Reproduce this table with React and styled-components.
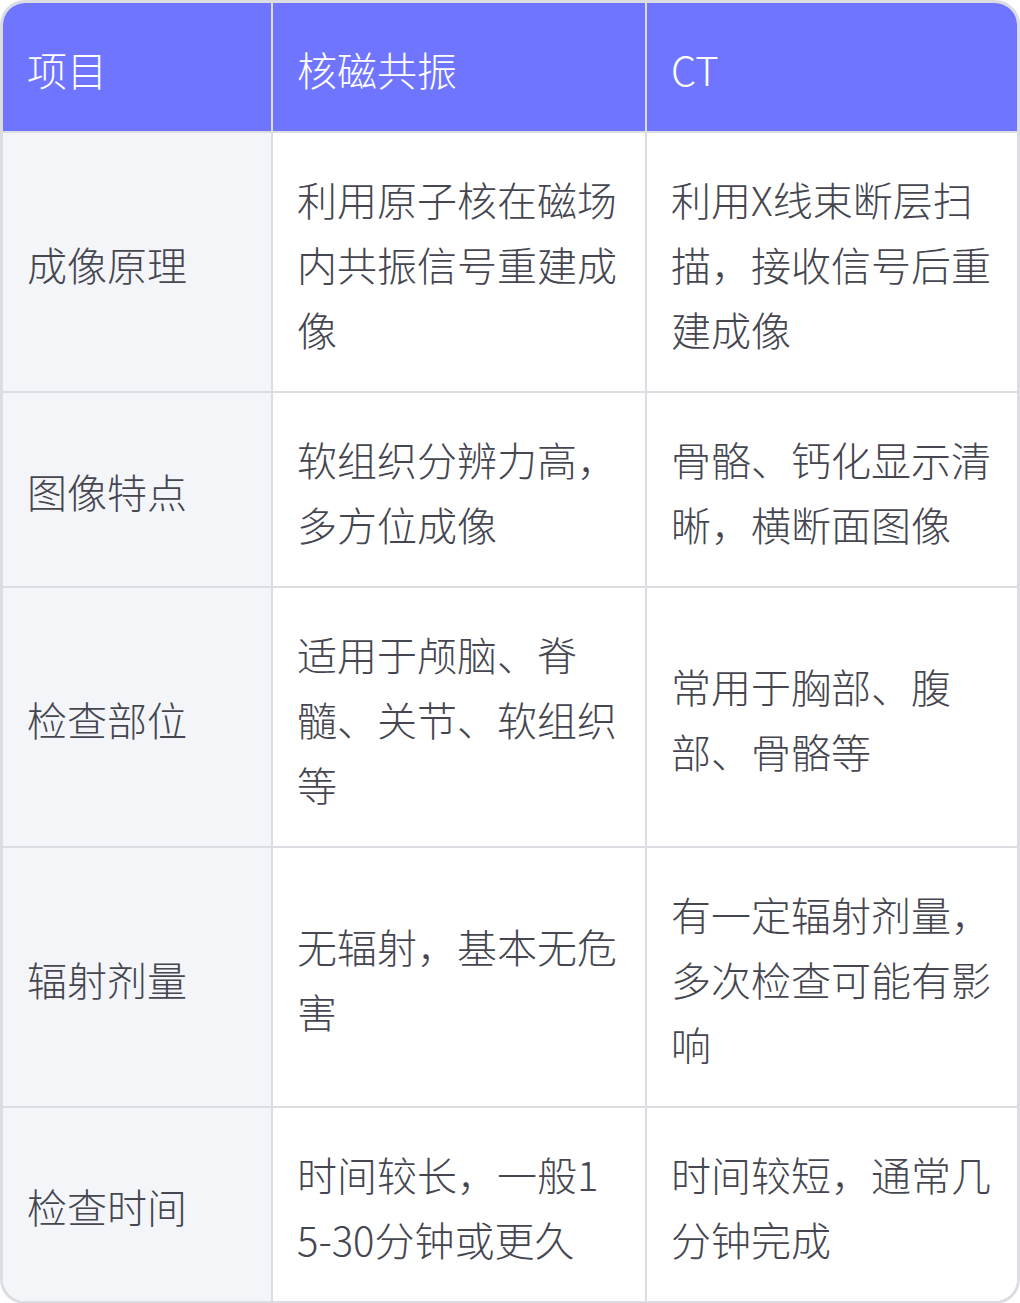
import React from 'react';
import styled, { createGlobalStyle } from 'styled-components';

const GlobalStyle = createGlobalStyle`
   html, body {
      margin: 0;
      padding: 0;
      background: #ffffff;
   }
   body {
      font-family: "Noto Sans CJK SC", "Noto Sans", sans-serif;
   }
`;

const rows = [
   {
      item: '成像原理',
      mri: '利用原子核在磁场内共振信号重建成像',
      ct: '利用X线束断层扫描，接收信号后重建成像',
   },
   {
      item: '图像特点',
      mri: '软组织分辨力高，多方位成像',
      ct: '骨骼、钙化显示清晰，横断面图像',
   },
   {
      item: '检查部位',
      mri: '适用于颅脑、脊髓、关节、软组织等',
      ct: '常用于胸部、腹部、骨骼等',
   },
   {
      item: '辐射剂量',
      mri: '无辐射，基本无危害',
      ct: '有一定辐射剂量，多次检查可能有影响',
   },
   {
      item: '检查时间',
      mri: '时间较长，一般15-30分钟或更久',
      ct: '时间较短，通常几分钟完成',
   },
];

const App = () => {
   return (
      <>
         <GlobalStyle />
         <TableFrame>
            <Table>
               <colgroup>
                  <col style={{ width: 270 }} />
                  <col style={{ width: 374 }} />
                  <col />
               </colgroup>
               <thead>
                  <tr>
                     <HeadCell>项目</HeadCell>
                     <HeadCell>核磁共振</HeadCell>
                     <HeadCell>CT</HeadCell>
                  </tr>
               </thead>
               <tbody>
                  {rows.map((row) => (
                     <tr key={row.item}>
                        <Cell label>{row.item}</Cell>
                        <Cell>{row.mri}</Cell>
                        <Cell>{row.ct}</Cell>
                     </tr>
                  ))}
               </tbody>
            </Table>
         </TableFrame>
      </>
   );
}

/* Styles */
const TableFrame = styled.div`
   width: 1020px;
   box-sizing: border-box;
   border: 3px solid #dcdde3;
   border-radius: 25px;
   overflow: hidden;
`;

const Table = styled.table`
   width: 100%;
   table-layout: fixed;
   border-collapse: separate;
   border-spacing: 0;

   tbody tr:last-child td {
      border-bottom: none;
   }
`;

const HeadCell = styled.th`
   padding: 33.5px 26px 29.5px 24px;
   background: #7075ff;
   color: #ffffff;
   font-size: 40px;
   font-weight: 300;
   line-height: 65px;
   text-align: left;
   border-right: 2px solid #dcdde3;
   border-bottom: 2px solid #dcdde3;

   &:last-child {
      border-right: none;
   }
`;

const Cell = styled.td`
   padding: 33.5px 26px 29.5px 24px;
   background: ${props => props.label ? '#f4f5f9' : '#ffffff'};
   color: #45464f;
   font-size: 40px;
   font-weight: 300;
   line-height: 65px;
   vertical-align: middle;
   word-break: break-all;
   border-right: 2px solid #dcdde3;
   border-bottom: 2px solid #dcdde3;

   &:last-child {
      border-right: none;
   }
`;

export default App;
